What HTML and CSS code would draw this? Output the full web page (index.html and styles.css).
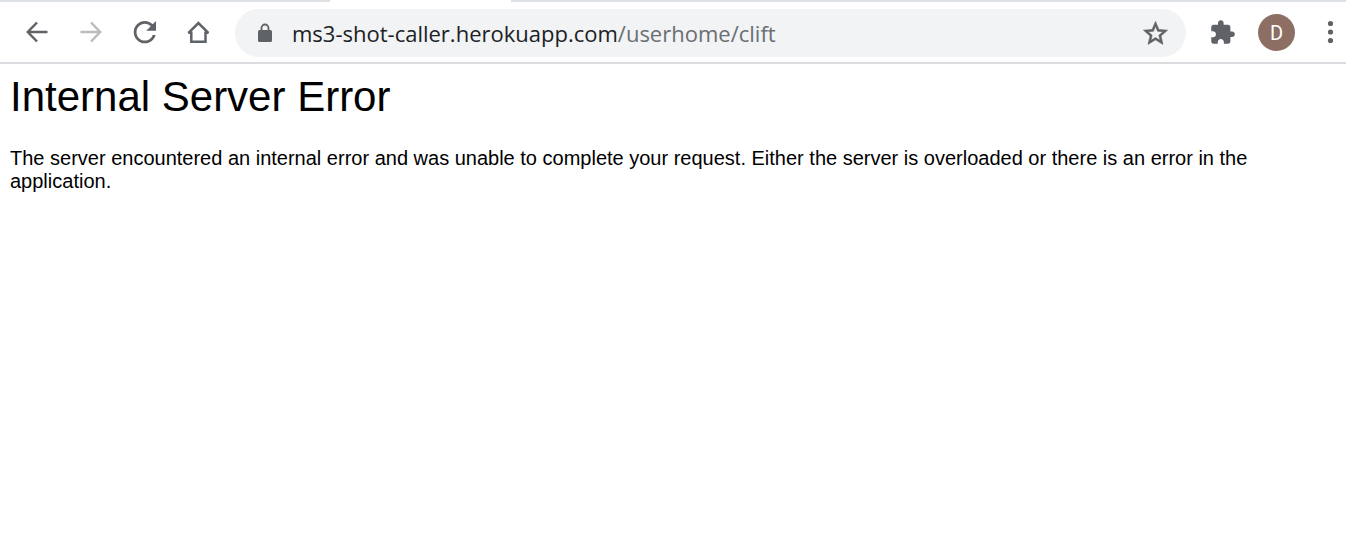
FILE: index.html
```html
<!DOCTYPE html>
<html lang="en">
<head>
<meta charset="utf-8">
<title>500 Internal Server Error</title>
<link rel="stylesheet" href="styles.css">
</head>
<body>
<header class="browser">
  <div class="tabstrip"><span class="tab"></span></div>
  <nav class="toolbar" aria-label="Browser toolbar">
    <div class="nav-buttons">
      <button class="icon-button" type="button" aria-label="Back">
        <svg class="icon" viewBox="0 0 32 32"><path class="line" d="M26.500 15H7M16 5.500L6.800 15l9.200 9.500"/></svg>
      </button>
      <button class="icon-button" type="button" aria-label="Forward" disabled>
        <svg class="icon" viewBox="0 0 32 32"><path class="line" d="M5.500 15H25M16 5.500L25.200 15l-9.200 9.500"/></svg>
      </button>
      <button class="icon-button" type="button" aria-label="Reload">
        <svg class="icon" viewBox=".6 1.1 23 23"><path d="M17.650 6.350C16.200 4.900 14.210 4 12 4c-4.420 0-7.990 3.580-7.990 8s3.570 8 7.990 8c3.730 0 6.840-2.550 7.730-6h-2.080c-.82 2.330-3.040 4-5.650 4-3.310 0-6-2.690-6-6s2.690-6 6-6c1.660 0 3.140.69 4.220 1.780L13 11h7V4z"/></svg>
      </button>
      <button class="icon-button" type="button" aria-label="Home">
        <svg class="icon" viewBox="0 0 32 32"><path class="line" stroke-miterlimit="2" d="M5.500 15.800H8.300V24.700H22.500V15.800H25.300L15.400 6Z"/></svg>
      </button>
    </div>
    <div class="omnibox">
      <svg class="lock" viewBox="0 0 14 20"><path d="M3.500 8V5a3.500 3.500 0 0 1 7 0v3" fill="none" stroke="currentColor" stroke-width="1.800"/><rect y="7" width="14" height="12" rx="1.500"/></svg>
      <a class="url" href="#">ms3-shot-caller.herokuapp.com<span class="path">/userhome/clift</span></a>
      <button class="star-button" type="button" aria-label="Bookmark this page">
        <svg class="star" viewBox="0 0 24 24"><path d="M22 9.240l-7.190-.62L12 2 9.190 8.630 2 9.240l5.460 4.730L5.820 21 12 17.270 18.180 21l-1.630-7.030L22 9.240zM12 15.400l-3.760 2.270 1-4.280-3.320-2.880 4.380-.38L12 6.100l1.710 4.040 4.380.38-3.320 2.880 1 4.280L12 15.400z"/></svg>
      </button>
    </div>
    <button class="extensions" type="button" aria-label="Extensions">
      <svg class="puzzle" viewBox="0 0 24 24"><path d="M20.500 11H19V7c0-1.100-.9-2-2-2h-4V3.500C13 2.120 11.880 1 10.500 1S8 2.120 8 3.500V5H4c-1.100 0-1.990.9-1.990 2v3.800H3.500c1.490 0 2.700 1.210 2.700 2.700s-1.210 2.700-2.700 2.700H2V20c0 1.100.9 2 2 2h3.800v-1.500c0-1.490 1.210-2.700 2.700-2.700s2.700 1.210 2.700 2.700V22H17c1.100 0 2-.9 2-2v-4h1.500c1.380 0 2.500-1.120 2.500-2.500S21.880 11 20.500 11z"/></svg>
    </button>
    <button class="avatar" type="button" aria-label="Profile D">D</button>
    <button class="icon-button" type="button" aria-label="Menu">
      <svg class="icon" viewBox="0 0 32 32"><circle cx="16.500" cy="6.500" r="2.600"/><circle cx="16.500" cy="15" r="2.600"/><circle cx="16.500" cy="23.500" r="2.600"/></svg>
    </button>
  </nav>
</header>
<main class="page">
  <h1 class="title">Internal Server Error</h1>
  <p class="message">The server encountered an internal error and was unable to complete your request. Either the server is overloaded or there is an error in the application.</p>
</main>
</body>
</html>
```
FILE: styles.css
```css
* {
  box-sizing: border-box;
}

body {
  margin: 0;
  background: #fff;
  color: #000;
  font-family: "Liberation Sans", Arial, sans-serif;
}

button {
  margin: 0;
  padding: 0;
  border: 0;
  background: none;
  color: inherit;
  font: inherit;
}

svg {
  display: block;
  fill: currentColor;
}

.browser {
  border-bottom: 2px solid #dadce0;
  color: #5f6368;
}

.tabstrip {
  height: 2px;
  padding-left: 330px;
  background: #dee1e6;
}

.tab {
  display: block;
  width: 181px;
  height: 2px;
  background: #fff;
}

.toolbar {
  display: flex;
  align-items: center;
  padding: 7px 0 5px 21px;
}

.nav-buttons {
  display: flex;
  gap: 22px;
  margin-right: 20px;
}

.icon-button:disabled {
  color: #babcbe;
}

.icon {
  width: 32px;
  height: 32px;
}

.line {
  fill: none;
  stroke: currentColor;
  stroke-width: 2.5;
}

.omnibox {
  display: flex;
  flex: 1;
  align-items: center;
  min-width: 0;
  height: 48px;
  padding: 0 16px 0 23px;
  border-radius: 24px;
  background: #f1f3f4;
}

.lock {
  flex: none;
  width: 14px;
  height: 20px;
  margin-right: 20px;
}

.url {
  flex: 1;
  min-width: 0;
  overflow: hidden;
  color: #202124;
  font-family: "Open Sans", "Noto Sans", sans-serif;
  font-size: 22px;
  line-height: 32px;
  text-decoration: none;
  white-space: nowrap;
}

.path {
  color: #6b6e72;
}

.star {
  width: 29px;
  height: 29px;
  stroke: currentColor;
  stroke-width: 0.5;
}

.extensions {
  margin: 0 22px 2px 23px;
}

.puzzle {
  width: 27px;
  height: 27px;
}

.avatar {
  width: 37px;
  height: 37px;
  margin: 0 19px 1px 0;
  border-radius: 50%;
  background: #8d6e63;
  color: #fff;
  font-family: Roboto, sans-serif;
  font-size: 20px;
}

.page {
  padding: 9px 10px;
}

.title {
  margin: 0 0 26px;
  font-size: 42px;
  font-weight: 400;
  line-height: 48px;
}

.message {
  margin: 0;
  font-size: 20px;
  line-height: 23px;
}
```
